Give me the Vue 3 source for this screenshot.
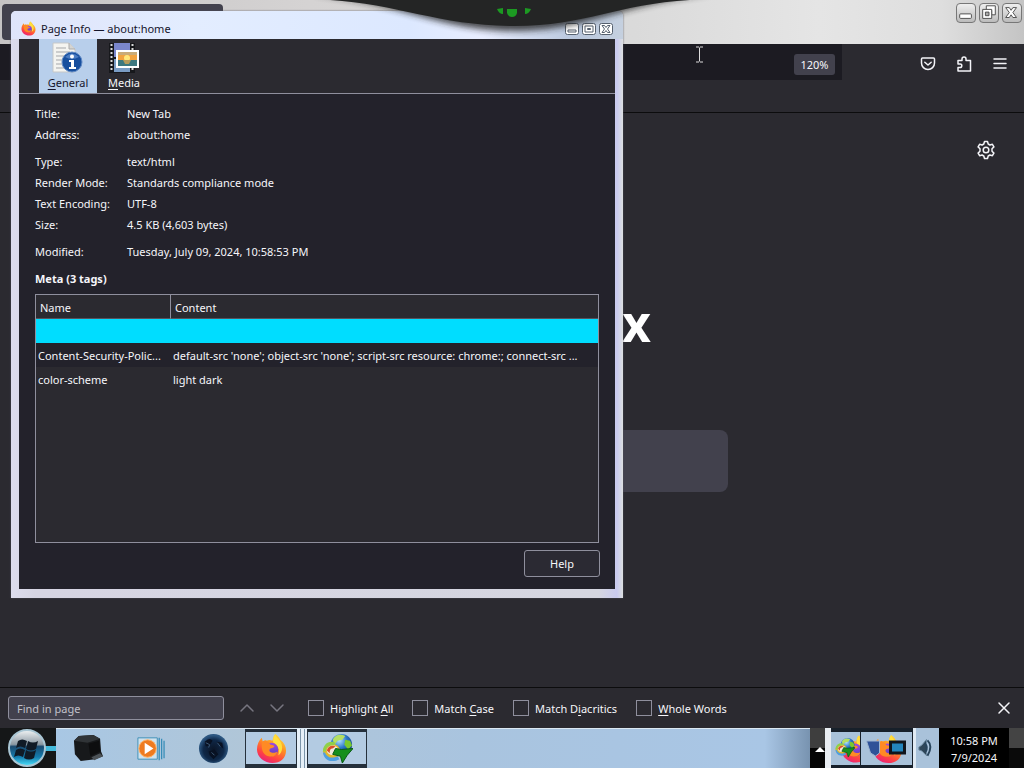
<script setup>
const groups = [
  [['Title:', 'New Tab'], ['Address:', 'about:home']],
  [['Type:', 'text/html'], ['Render Mode:', 'Standards compliance mode'], ['Text Encoding:', 'UTF-8'], ['Size:', '4.5 KB (4,603 bytes)']],
  [['Modified:', 'Tuesday, July 09, 2024, 10:58:53 PM']],
]
const meta = [
  ['', ''],
  ['Content-Security-Polic...', "default-src 'none'; object-src 'none'; script-src resource: chrome:; connect-src ..."],
  ['color-scheme', 'light dark'],
]
const options = [
  { id: 'hl', parts: ['Highlight ', 'A', 'll'] },
  { id: 'mc', parts: ['Match ', 'C', 'ase'] },
  { id: 'md', parts: ['Match D', 'i', 'acritics'] },
  { id: 'ww', parts: ['', 'W', 'hole Words'] },
]
</script>

<template>
  <div class="desktop">
    <svg class="defs" width="0" height="0" aria-hidden="true">
      <defs>
        <linearGradient id="fx" x1="0.8" y1="0" x2="0.3" y2="1">
          <stop offset="0" stop-color="#ffe53b" /><stop offset="0.4" stop-color="#ff9420" />
          <stop offset="0.75" stop-color="#ff4343" /><stop offset="1" stop-color="#e8207a" />
        </linearGradient>
        <linearGradient id="fxp" x1="0" y1="0" x2="0" y2="1">
          <stop offset="0" stop-color="#a04be0" /><stop offset="1" stop-color="#5a3fc0" />
        </linearGradient>
        <symbol id="firefox" viewBox="0 0 32 32">
          <path d="M20 1c3 2 4 4 5 6c4 3 6 7 6 11c0 8-6 13-14 13S1 25 1 17c0-5 2-9 5-12l1 4c1-1 3-2 4-1c2-1 4-1 6 0c1-3 1-5 3-7z" fill="url(#fx)" />
          <path d="M20 1c0 4 7 6 7 14c0 4-2 7-4 8c2-6-1-11-5-13c-1-3 0-7 2-9z" fill="#ffde3c" />
          <circle cx="16" cy="17" r="7" fill="url(#fxp)" />
          <path d="M6 9c4-2 7 0 9 3c2 0 4 1 4 2c-1 2-4 1-5 3c-1 3 4 5 8 2c-1 5-5 6-9 5c-5-1-8-6-7-15z" fill="#ff8a25" />
        </symbol>
        <radialGradient id="globe" cx="0.4" cy="0.3" r="0.8">
          <stop offset="0" stop-color="#b5e4ff" /><stop offset="0.45" stop-color="#2b77c8" /><stop offset="1" stop-color="#0b2f70" />
        </radialGradient>
        <symbol id="idm" viewBox="0 0 32 32">
          <circle cx="20" cy="12" r="11" fill="url(#globe)" />
          <path d="M11 7c3-6 8-6 13-4l-3 4l-5 1l-3 4z" fill="#b5df62" />
          <path d="M24 7l5 1l2 5l-4 4l-4-5z" fill="#79c82e" />
          <ellipse cx="10" cy="19" rx="9" ry="8" fill="#e2b92c" />
          <path d="M1 20c1 9 10 11 17 7l-2-3c-6 3-11 1-13-4z" fill="#4f9fe0" />
          <path d="M1 19c0-7 6-12 13-9l-2 3c-5-1-8 2-8 6z" fill="#8fd04a" />
          <ellipse cx="11" cy="18" rx="6" ry="5" fill="#f0e9dc" />
          <path d="M5 18c1-5 6-6 9-4l-3 2c-2 0-3 1-3 5z" fill="#d8502c" />
          <path d="M14 16l6 1l12-1l-6 7l-5 8l-2-7l-8-2z" fill="#168f1c" stroke="#075812" />
        </symbol>
      </defs>
    </svg>

    <header class="titlebar">
      <div class="tab"></div>
      <div class="controls">
        <button aria-label="Minimize"><svg viewBox="0 0 20 20"><rect x="3" y="11" width="13" height="5" rx="1" fill="#fff" stroke="#444" /></svg></button>
        <button aria-label="Restore"><svg viewBox="0 0 20 20" fill="#fff" stroke="#444"><path d="M7 2h10v10h-4V7H7z" /><path d="M3 6h10v10H3z" /><path d="M6 9h4v4H6z" fill="#aaa" /></svg></button>
        <button aria-label="Close"><svg viewBox="0 0 20 20"><path d="M3 4h4l2 3l2-3h4l-4 5.500l4 5.500h-4l-2-3l-2 3H3l4-5.500z" fill="#fff" stroke="#444" /></svg></button>
      </div>
    </header>

    <nav class="navbar">
      <div class="urlbar"><button class="zoom">120%</button></div>
      <div class="nav-icons">
        <button aria-label="Save to Pocket"><svg viewBox="0 0 16 16"><path d="M2.500 2h11q1 0 1 1v4a6.500 6.500 0 0 1-13 0V3q0-1 1-1z" /><path d="M4.800 6.200L8 9l3.200-2.800" /></svg></button>
        <button aria-label="Extensions"><svg viewBox="0 0 16 16"><path d="M2 15V11.500h2q1.800 0 1.800-1.800T4 8H2V4.500h4V3q0-2 2-2t2 2v1.500h4.500V15z" /></svg></button>
        <button aria-label="Menu"><svg viewBox="0 0 16 16"><path d="M2 3h12M2 7.500h12M2 12h12" /></svg></button>
      </div>
    </nav>

    <main class="page">
      <button class="gear" aria-label="Personalize">
        <svg viewBox="0 0 20 20"><path d="M8.500 1.500h3l.7 2.500l1.700 1l2.500-.7l1.500 2.600L16 8.800v2.400l1.900 1.900l-1.500 2.600l-2.500-.7l-1.700 1l-.7 2.500h-3l-.7-2.500l-1.700-1l-2.500.7l-1.500-2.600L4 11.200V8.800L2.100 6.900l1.500-2.600l2.500.7l1.700-1z" /><circle cx="10" cy="10" r="2.800" /></svg>
      </button>
      <div class="wordmark">x</div>
      <div class="search"></div>
    </main>

    <footer class="findbar">
      <input class="find" type="text" placeholder="Find in page" aria-label="Find in page">
      <div class="arrows">
        <button aria-label="Previous"><svg viewBox="0 0 16 16"><path d="M2 11l6-6l6 6" /></svg></button>
        <button aria-label="Next"><svg viewBox="0 0 16 16"><path d="M2 5l6 6l6-6" /></svg></button>
      </div>
      <label v-for="o in options" :key="o.id" :for="o.id" class="option">
        <input :id="o.id" type="checkbox"><span>{{ o.parts[0] }}<u>{{ o.parts[1] }}</u>{{ o.parts[2] }}</span>
      </label>
      <button class="find-close" aria-label="Close find bar"><svg viewBox="0 0 16 16"><path d="M3 3l10 10M13 3L3 13" /></svg></button>
    </footer>

    <div class="taskbar">
      <button class="start" aria-label="Start">
        <svg viewBox="0 0 56 40">
          <defs>
            <linearGradient id="orb" x1="0" y1="0" x2="0" y2="1"><stop offset="0" stop-color="#f2f4f5" /><stop offset="0.4" stop-color="#8a98a3" /><stop offset="0.46" stop-color="#1b4a70" /><stop offset="0.75" stop-color="#147cae" /><stop offset="1" stop-color="#4ee5ff" /></linearGradient>
          </defs>
          <path d="M45 18h11v5H45z" fill="#43b9da" />
          <circle cx="27" cy="20" r="18" fill="url(#orb)" stroke="#a9c6d4" stroke-width="2" />
          <path d="M18 13q4-3 9 0l-2 7q-5-3-9 0zM28 13q5 3 10 0l-2 8q-5 3-10 0zM16 22q4-3 9 0l-2 7q-5-3-9 0zM26 22q5 3 10 0l-2 8q-5 3-10 0z" fill="#101a26" />
        </svg>
      </button>
      <div class="tasks">
        <button class="task" aria-label="Computer"><svg viewBox="0 0 32 32"><path d="M2 8l5-5l15-1l7 4l1 13l2 5l-8 3l-15 2l-6-7z" fill="#17191b" /><path d="M2 8l5-5l15-1l7 4l-13 4z" fill="#303437" /><path d="M17 11l11-3l1 11l-10 5z" fill="#0d0e0f" /><path d="M20 25l9-4l3 3l-9 4z" fill="#4c5256" /></svg></button>
        <button class="task" aria-label="Media Player"><svg viewBox="0 0 32 32"><path d="M3 5h20v22H3z" fill="#cfe2ee" stroke="#3f91b8" /><path d="M25 5v23M27.500 6v21M30 8v18" stroke="#378db8" stroke-width="1.300" /><circle cx="13" cy="16" r="9" fill="#ee7b20" stroke="#ffb468" /><path d="M10 10l9 6l-9 6z" fill="#fff" /></svg></button>
        <button class="task" aria-label="Earth"><svg viewBox="0 0 32 32"><defs><radialGradient id="night" cx=".5" cy=".55"><stop offset="0" stop-color="#0b1526" /><stop offset="0.7" stop-color="#0f2848" /><stop offset="1" stop-color="#2c5680" /></radialGradient></defs><circle cx="16" cy="16" r="15" fill="url(#night)" /><path d="M7 9q5-5 8-1l-3 5l-4 1zM19 9l6 1l1 6l-4-3zM11 19l6-2l4 5l-5 5l-4-4z" fill="#081122" /><path d="M8 10l4 2l-1 3M20 10l3 4M14 20l3 3" stroke="#3d5a78" fill="none" /></svg></button>
        <button class="task open" aria-label="Firefox"><svg viewBox="0 0 32 32"><use href="#firefox" /></svg></button>
        <span class="stack"></span>
        <button class="task open wide" aria-label="Download Manager"><svg viewBox="0 0 32 32"><use href="#idm" /></svg></button>
      </div>
      <div class="tray-edge"><svg viewBox="0 0 15 20"><path d="M5 14l5-5l5 5z" fill="#fff" /></svg></div>
      <div class="tray">
        <button aria-label="Downloads"><svg viewBox="0 0 30 32"><use href="#firefox" x="10" y="1" width="30" height="30" /><use href="#idm" x="4" y="4" width="21" height="21" /></svg></button>
        <button class="tray-wide" aria-label="Network"><svg viewBox="0 0 50 32"><use href="#firefox" x="11" y="1" width="30" height="30" /><path d="M5 8h13v12l-4 3l-5-3z" fill="#2f5298" stroke="#9fb6d1" /><path d="M29 9h14v11H29z" fill="#2385bc" stroke="#10151c" stroke-width="3" /></svg></button>
        <button class="volume" aria-label="Volume"><svg viewBox="0 0 24 32"><path d="M3 15l3-2l5-6v17l-5-5l-3-1z" fill="#2f4658" stroke="#6e8ba2" /><path d="M12 8q6 6 0 16M9 11q4 4 1 9" fill="none" stroke="#28445b" stroke-width="2" /></svg></button>
      </div>
      <div class="clock"><span>10:58 PM</span><span>7/9/2024</span></div>
      <div class="show-desktop"></div>
    </div>

    <section class="dialog" aria-label="Page Info">
      <header class="dialog-title">
        <svg viewBox="0 0 32 32"><use href="#firefox" /></svg>
        <span>Page Info — about:home</span>
        <div class="dialog-controls">
          <button aria-label="Minimize"><svg viewBox="0 0 14 12"><rect x=".5" y=".5" width="13" height="11" rx="2" /><path d="M3 7h8v2H3z" /></svg></button>
          <button aria-label="Maximize"><svg viewBox="0 0 14 12"><rect x=".5" y=".5" width="13" height="11" rx="2" /><path d="M3 3h8v6H3zM5.500 5.500h3v1h-3z" /></svg></button>
          <button aria-label="Close"><svg viewBox="0 0 14 12"><rect x=".5" y=".5" width="13" height="11" rx="2" /><path d="M3 2.500h2.500L7 4.500l1.500-2H11L8.500 6l2.500 3.500H8.500L7 7.500l-1.500 2H3L5.500 6z" /></svg></button>
        </div>
      </header>
      <div class="dialog-body">
        <div class="toolbar">
          <button class="tool selected">
            <svg viewBox="0 0 32 32"><path d="M1 1h16l6 6v23H1z" fill="#f4f4f0" stroke="#c5c7c8" /><path d="M17 1v6h6" fill="#d5d5d2" stroke="#aaa" /><path d="M4 6h10M4 10h14M4 14h11M4 18h8M4 22h7M4 26h9" stroke="#a5a7aa" /><circle cx="20" cy="20" r="10" fill="#174f9e" stroke="#5f89c5" /><path d="M13 15q7-7 14 0q-7 4-14 0z" fill="#4b7cc2" /><circle cx="20" cy="14.500" r="2" fill="#fff" /><path d="M17 18h5v7h2v2h-7v-2h2v-5h-2z" fill="#fff" /></svg>
            <span><u>G</u>eneral</span>
          </button>
          <button class="tool">
            <svg viewBox="0 0 32 32"><path d="M1 1h26v30H1z" fill="#17181c" /><path d="M6 1h16v14H6z" fill="#7a86cc" /><path d="M6 17h16v13H6z" fill="#7a9cc4" /><path d="M3.500 2v28M24.500 2v28" stroke="#d9d9d9" stroke-width="2" stroke-dasharray="2 2" /><path d="M9 9h21v16H9z" fill="#f2a33f" stroke="#fff" stroke-width="2" /><path d="M10 10h19v3H10z" fill="#c9ab78" /><circle cx="19" cy="16" r="3" fill="#ffe779" /><path d="M10 18h19v6H10z" fill="#3d7880" /><path d="M15 18h8l-2 4h-4z" fill="#b59a5a" /></svg>
            <span><u>M</u>edia</span>
          </button>
        </div>
        <div class="info">
          <dl v-for="(g, i) in groups" :key="i">
            <div v-for="r in g" :key="r[0]"><dt>{{ r[0] }}</dt><dd>{{ r[1] }}</dd></div>
          </dl>
          <h2>Meta (3 tags)</h2>
          <div class="tree">
            <table>
              <thead><tr><th class="name">Name</th><th>Content</th></tr></thead>
              <tbody><tr v-for="(m, i) in meta" :key="i"><td>{{ m[0] }}</td><td>{{ m[1] }}</td></tr></tbody>
            </table>
          </div>
          <div class="actions"><button class="help">Help</button></div>
        </div>
      </div>
    </section>

    <svg class="notch" viewBox="0 0 400 40" aria-hidden="true">
      <defs><filter id="soft" x="-10%" y="-50%" width="120%" height="220%"><feGaussianBlur stdDeviation="3" /></filter></defs>
      <path d="M0 -6C90 4 130 31 202 31S310 4 400 -6z" fill="#222" opacity=".8" filter="url(#soft)" />
      <path d="M18 0C85 4 130 26 202 26S305 4 378 0z" fill="#242525" />
      <path d="M185 9l6-1v6q-4 0-6-5zM219 9l-6-1v6q4 0 6-5zM195 9h10v4q-1 4-5 4t-5-4z" fill="#1c9a22" />
    </svg>
    <svg class="caret" viewBox="0 0 9 17" aria-hidden="true"><path d="M1 1h3M5 1h3M4.500 1.500v14M1 16h3M5 16h3" fill="none" stroke="#ddd" /></svg>
  </div>
</template>

<style>
body { background: #2b2a30; }
</style>

<style scoped>
* { box-sizing: border-box; }
.desktop {
  position: relative;
  display: flex;
  flex-direction: column;
  min-height: 100vh;
  overflow: hidden;
  background: #2b2a30;
  color: #f6f6fa;
  font: 11px/20px "Noto Sans", "Open Sans", sans-serif;
}
button { padding: 0; border: 0; background: none; color: inherit; font: inherit; }
svg { display: block; }
.defs { position: absolute; }
.titlebar {
  display: flex;
  justify-content: space-between;
  height: 44px;
  background: linear-gradient(90deg, #c5c3c4, #d5d3d3 30%, #dadada 62%, #e5e5e5 80%, #dedede 92%, #c4c4c4);
}
.tab { width: 221px; height: 36px; margin: 4px 0 0 2px; border-radius: 4px; background: #42414d; }
.controls { display: flex; gap: 3px; padding: 3px 2px; }
.controls button { width: 20px; height: 20px; border: 1px solid #777; border-radius: 4px; background: linear-gradient(#eee, #bbb); }
.navbar { display: flex; justify-content: space-between; height: 69px; border-bottom: 1px solid #0c0c0d; }
.urlbar {
  display: flex;
  flex: 1;
  justify-content: flex-end;
  align-items: center;
  height: 36px;
  padding: 5px 7px 0;
  background: #1c1b22;
}
.zoom { width: 41px; height: 21px; border-radius: 3px; background: #42414d; }
.nav-icons { display: flex; gap: 20px; width: 182px; padding: 12px 16px 0; justify-content: flex-end; }
.nav-icons button, .nav-icons svg { width: 16px; height: 16px; }
.nav-icons svg, .gear svg, .arrows svg, .find-close svg { fill: none; stroke: #f4f4f8; stroke-width: 1.5; stroke-linecap: round; stroke-linejoin: round; }
.page { display: flex; flex: 1; flex-direction: column; align-items: center; }
.gear { align-self: flex-end; width: 20px; height: 20px; margin: 27px 28px 0 0; }
.wordmark { width: 278px; margin-top: 138px; text-align: right; font-size: 50px; font-weight: 700; line-height: 50px; color: #fff; }
.search { width: 432px; height: 62px; margin-top: 82px; border-radius: 8px; background: #42414d; }
.findbar { display: flex; align-items: center; height: 41px; padding: 0 12px 0 8px; border-top: 1px solid #0c0c0d; }
.find {
  width: 216px;
  height: 24px;
  padding: 0 8px;
  border: 1px solid #8f8f9d;
  border-radius: 3px;
  background: #42414d;
  color: #fff;
  font: inherit;
}
.find::placeholder { color: #c0c0c9; }
.arrows { display: flex; gap: 14px; margin: 0 23px 0 15px; }
.arrows svg { width: 16px; height: 16px; stroke: #777680; }
.option { display: flex; align-items: center; gap: 6px; margin-right: 19px; }
.option input { width: 16px; height: 16px; margin: 0; border: 1px solid #8f8f9d; appearance: none; }
.option span { line-height: 18px; padding-top: 2px; }
.option u, .tool u { text-underline-offset: 2px; }
.find-close { margin-left: auto; }
.find-close svg { width: 16px; height: 16px; }
.taskbar { display: flex; height: 40px; background: #080808; }
.start { width: 56px; background: #151718; }
.tasks {
  display: flex;
  flex: 1;
  align-items: stretch;
  border-top: 1px solid #dce9f3;
  background: linear-gradient(90deg, #a8c7e4, #b0c6d8 25%, #a9c4df 55%, #a9c6e5 94%, #7893b0);
}
.task { display: flex; align-items: center; justify-content: center; width: 63px; }
.task svg { width: 31px; height: 31px; }
.task.open { width: 52px; border: 1px solid #25303b; border-width: 3px 1px 4px; background: #b3cbe2; }
.stack { width: 10px; background: repeating-linear-gradient(90deg, #e6f0f8 0 3px, #7c95aa 3px 4px); }
.task.wide { width: 60px; }
.tray-edge { display: flex; align-items: center; width: 15px; background: linear-gradient(#3e3e3e 50%, #050505 50%); }
.tray-edge svg { width: 15px; height: 20px; }
.tray { display: flex; border-left: 6px solid #e9edf2; background: #a9c2da; }
.tray button { width: 30px; border: 1px solid #17202a; border-width: 4px 1px 3px 0; }
.tray svg { width: 100%; height: 32px; }
.tray .tray-wide { width: 52px; }
.tray .volume { width: 26px; border-width: 0 0 0 3px; border-color: #e0eaf3; }
.clock { display: flex; flex-direction: column; align-items: center; width: 70px; padding-top: 4px; background: #000; line-height: 17px; }
.show-desktop { width: 15px; background: linear-gradient(#444 50%, #0a0a0a 50%); }

.dialog {
  position: absolute;
  top: 11px;
  left: 11px;
  width: 612px;
  padding: 0 8px 9px;
  border-radius: 5px 5px 0 0;
  background: linear-gradient(90deg, #dcdced, #d6d5e3 4%, #d5d6e0 96%, #c9caef 99%, #dcdfe0);
  box-shadow: 0 0 2px #55555f;
}
.dialog-title {
  display: flex;
  align-items: center;
  gap: 5px;
  height: 28px;
  margin: 0 -8px;
  padding: 7px 10px 0;
  border-radius: 5px 5px 0 0;
  background: linear-gradient(90deg, #dfe4fa, #e3edff 30%, #dce8ff 65%, #e8edff 77%, #b9c7dd 92%, #c5d0df);
  color: #15152b;
}
.dialog-title > svg { width: 15px; height: 15px; }
.dialog-controls { display: flex; gap: 3px; margin-left: auto; }
.dialog-controls svg { width: 14px; height: 12px; fill: #fff; stroke: #56616f; }
.dialog-body { background: #23222b; }
.toolbar { display: flex; height: 55px; padding-left: 20px; border-bottom: 1px solid #8f8f9d; background: #2b2a30; }
.tool { display: flex; flex-direction: column; align-items: center; width: 54px; padding-top: 3px; line-height: 18px; }
.tool svg { width: 32px; height: 32px; }
.tool.selected { width: 58px; background: #b8cfeb; color: #15152b; }
.info { padding: 9px 16px 12px; }
dl { margin: 0 0 6px; }
dl div { display: flex; line-height: 21px; }
dt { width: 92px; }
dd { margin: 0; }
h2 { margin: 0; font-size: 11px; line-height: 21px; }
.tree { height: 249px; margin-top: 5px; border: 1px solid #8f8f9d; background: #2b2a30; }
table { width: 100%; table-layout: fixed; border-collapse: separate; border-spacing: 0; }
th, td { height: 24px; padding: 1px 2px 0; overflow: hidden; text-align: left; white-space: nowrap; }
th { padding: 2px 4px 0; border-bottom: 1px solid #55545e; font-weight: 400; }
.name { width: 135px; border-right: 1px solid #8f8f9d; }
tbody tr:nth-child(1) { background: #00ddff; }
tbody tr:nth-child(2) { background: #23222b; }
td:last-child { padding-right: 0; }
.actions { display: flex; justify-content: flex-end; margin: 7px -1px 0 0; }
.help { width: 76px; height: 27px; border: 1px solid #8f8f9d; border-radius: 3px; background: #2b2a33; }

.notch { position: absolute; top: 0; left: 50%; width: 400px; height: 40px; margin-left: -200px; }
.caret { position: absolute; top: 46px; left: 695px; width: 9px; height: 17px; }
</style>
